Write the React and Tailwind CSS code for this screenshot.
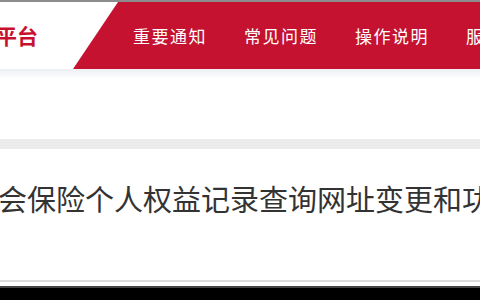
export default function App() {
  const nav = ["重要通知", "常见问题", "操作说明", "服务大厅"];
  const font = { fontFamily: '"Microsoft YaHei", "Noto Sans CJK SC", sans-serif' };
  return (
    <div className="w-[480px] h-[300px] overflow-hidden bg-white flex flex-col" style={font}>
      <div className="h-[2px] bg-[#8c8c8c] shrink-0" />
      <div className="h-[67px] shrink-0 flex">
        <div className="w-[73px] shrink-0 flex items-center overflow-hidden">
          <span className="ml-[-4px] text-[21px] font-bold text-[#c8102e] leading-none whitespace-nowrap">平台</span>
        </div>
        <div className="flex-1 bg-[#c41230] [clip-path:polygon(45px_0,100%_0,100%_100%,0_100%)] flex items-center pl-[60px] overflow-hidden">
          {nav.map((t, i) => (
            <div key={i} className="w-[111px] shrink-0 text-white text-[17px] leading-none whitespace-nowrap tracking-[1.5px]">
              {t}
            </div>
          ))}
        </div>
      </div>
      <div className="h-[10px] shrink-0 bg-gradient-to-b from-[#eceff1] to-white" />
      <div className="h-[60px] shrink-0" />
      <div className="h-[10px] shrink-0 bg-[#ebebeb]" />
      <div className="flex-1 flex items-start pt-[35px] overflow-hidden">
        <div className="ml-[-2px] text-[29px] leading-none text-[#333333] whitespace-nowrap">
          会保险个人权益记录查询网址变更和功能调整
        </div>
      </div>
      <div className="h-[2px] shrink-0 bg-[#dcdcdc]" />
      <div className="h-[4px] shrink-0 bg-white" />
      <div className="h-[2px] shrink-0 bg-[#444]" />
      <div className="h-[12px] shrink-0 bg-black" />
    </div>
  );
}
